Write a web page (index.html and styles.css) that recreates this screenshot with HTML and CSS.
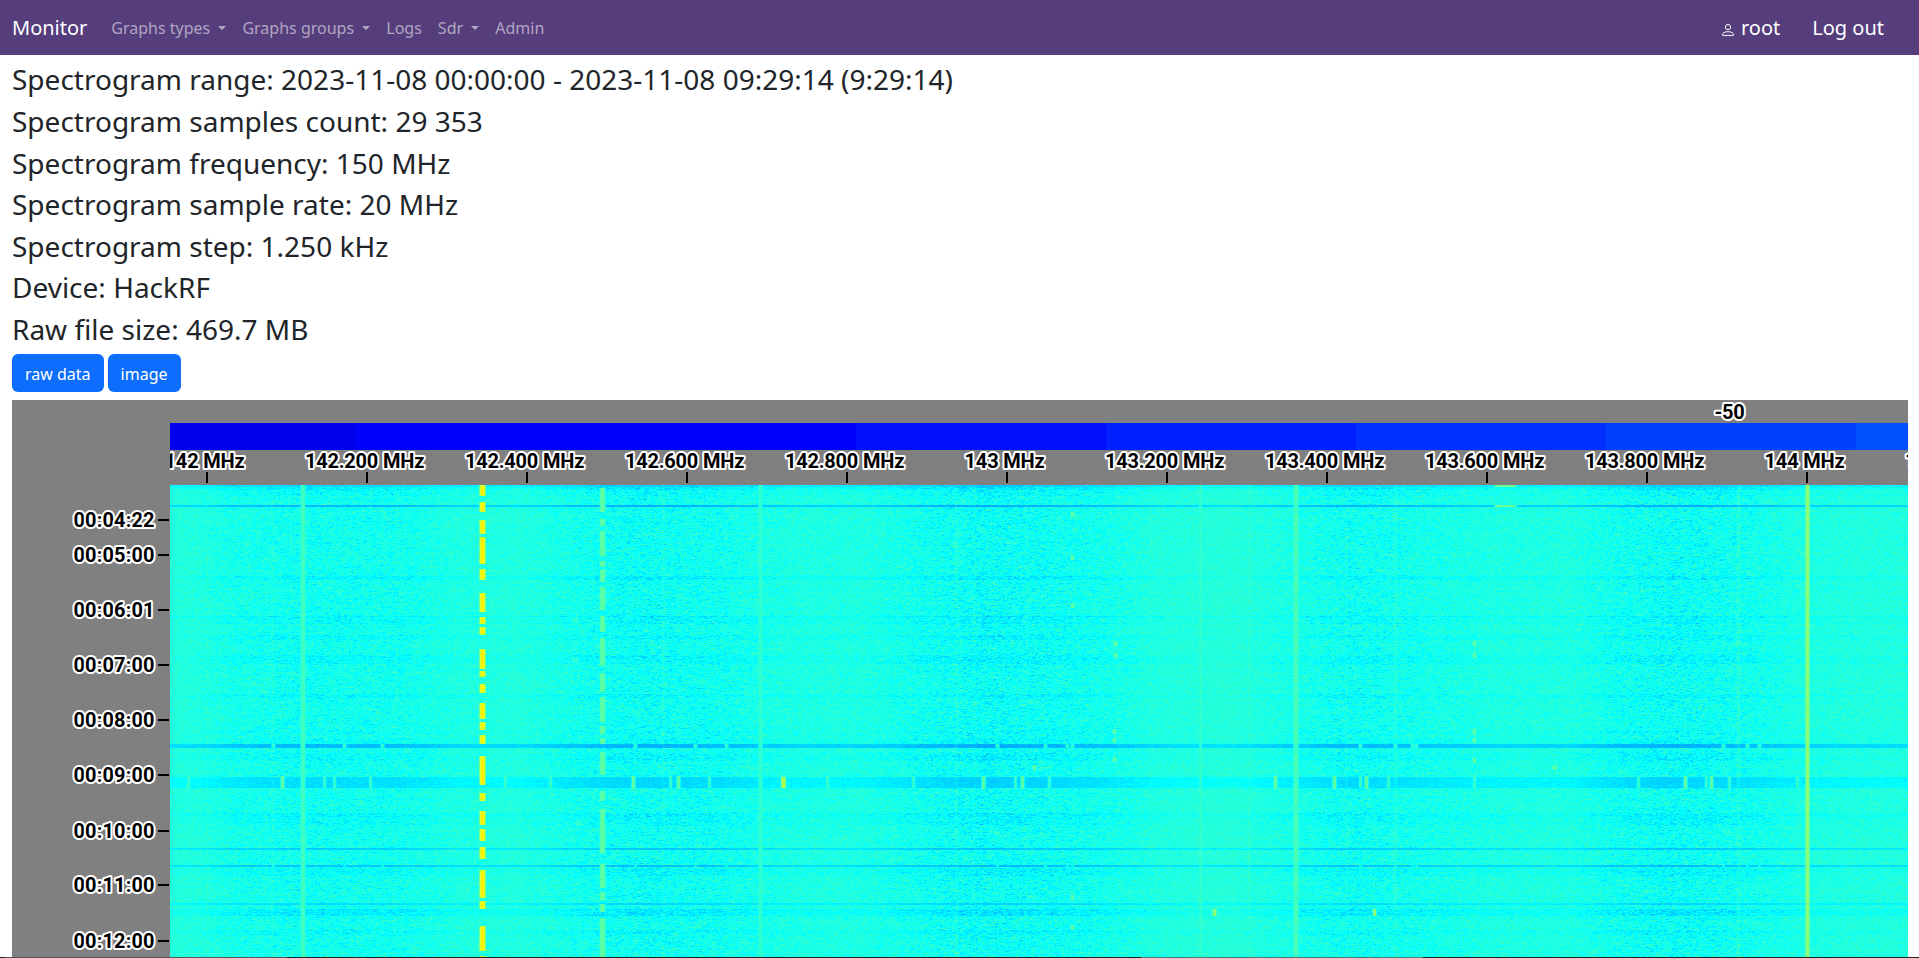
FILE: index.html
```html
<!DOCTYPE html>
<html lang="en">
<head>
<meta charset="utf-8">
<title>Monitor</title>
<link rel="stylesheet" href="styles.css">
</head>
<body>
<nav class="navbar">
  <a class="brand">Monitor</a>
  <a class="nav-link dropdown">Graphs types </a>
  <a class="nav-link dropdown">Graphs groups </a>
  <a class="nav-link">Logs</a>
  <a class="nav-link dropdown">Sdr </a>
  <a class="nav-link">Admin</a>
  <div class="account">
    <a class="user"><svg class="user-icon" viewBox="0 0 12 12"><circle cx="6" cy="3.1" r="2.6"/><path d="M.5 11.4V10.6C.5 8.8 3 7.7 6 7.7s5.5 1.1 5.5 2.9v.8z"/></svg>root</a>
    <a>Log out</a>
  </div>
</nav>
<main class="content">
  <h3>Spectrogram range: 2023-11-08 00:00:00 - 2023-11-08 09:29:14 (9:29:14)</h3>
  <h3>Spectrogram samples count: 29 353</h3>
  <h3>Spectrogram frequency: 150 MHz</h3>
  <h3>Spectrogram sample rate: 20 MHz</h3>
  <h3>Spectrogram step: 1.250 kHz</h3>
  <h3>Device: HackRF</h3>
  <h3>Raw file size: 469.7 MB</h3>
  <div class="buttons"><a class="btn">raw data</a><a class="btn">image</a></div>
  <div class="chart">
    <svg class="time-axis" id="time" width="158" height="558"></svg>
    <div class="plot">
      <svg class="freq-axis" id="freq" width="1738" height="85"></svg>
      <canvas id="heat" width="1738" height="473"></canvas>
    </div>
  </div>
</main>
<div class="status"></div>
<script src="script.js"></script>
</body>
</html>
```

FILE: styles.css
```css
* { box-sizing: border-box; }
body {
  margin: 0;
  height: 958px;
  overflow: hidden;
  position: relative;
  background: #fff;
  color: #212529;
  font: 16px/1.5 "Noto Sans", sans-serif;
}
.navbar {
  display: flex;
  align-items: center;
  height: 55px;
  padding: 0 27px 0 12px;
  background: #563d7c;
  color: #fff;
}
.brand { font-size: 20px; margin-right: 16px; }
.nav-link { padding: 0 8px; color: rgba(255, 255, 255, .55); white-space: pre; }
.dropdown::after {
  content: "";
  display: inline-block;
  margin-left: 4px;
  vertical-align: 4px;
  border-top: 4.8px solid;
  border-left: 4.8px solid transparent;
  border-right: 4.8px solid transparent;
}
.account { display: flex; gap: 32px; margin-left: auto; padding-right: 8px; font-size: 20px; }
.user { display: flex; align-items: center; gap: 7px; }
.user-icon { width: 12px; height: 12px; margin-top: 4px; fill: none; stroke: #fff; stroke-width: 1; }
.content { padding: 8.4px 11px 0 12px; }
h3 { margin: 0 0 8px; font-size: 28px; line-height: 33.6px; font-weight: 400; }
.buttons { display: flex; gap: 4px; height: 38px; margin: -.6px 0 8px; }
.btn { padding: 8px 13px 6px; border-radius: 6px; background: #0d6efd; color: #fff; line-height: 24px; }
.chart { display: flex; height: 558px; background: #808080; overflow: hidden; }
.time-axis, .freq-axis, canvas { display: block; flex: none; }
.plot { width: 1738px; overflow: hidden; }
text {
  font: 700 20px Roboto, sans-serif;
  fill: #000;
  stroke: #fff;
  stroke-width: 4px;
  stroke-linejoin: round;
  paint-order: stroke fill;
}
.freq-axis text { letter-spacing: -.2px; }
.status {
  position: absolute;
  left: 0;
  top: 957px;
  width: 1919px;
  height: 1px;
  background: linear-gradient(90deg, #222 5px, #555 5px 287px, #222 287px 1141px, #467a76 1141px 1423px, #222 1423px);
}
```

FILE: script.js
```js
const NS = 'http://www.w3.org/2000/svg';
function add(parent, tag, attrs, text) {
  const el = document.createElementNS(NS, tag);
  for (const k in attrs) el.setAttribute(k, attrs[k]);
  if (text) el.textContent = text;
  parent.appendChild(el);
}

// Frequency axis with the power scale above it
const freq = document.getElementById('freq');
const scale = [[0, '#0000ef'], [187, '#0000ff'], [686, '#0010ff'], [936, '#0020ff'], [1186, '#0030ff'], [1436, '#0040ff'], [1686, '#0050ff']];
scale.forEach(([x, fill], i) => {
  const end = scale[i + 1] ? scale[i + 1][0] : 1738;
  add(freq, 'rect', { x, y: 23, width: end - x, height: 27, fill });
});
add(freq, 'text', { x: 1559.5, y: 19, 'text-anchor': 'middle' }, '-50');
for (let i = 0; i < 12; i++) {
  const mhz = 142 + i * 0.2;
  const label = (i % 5 ? mhz.toFixed(3) : Math.round(mhz)) + ' MHz';
  add(freq, 'text', { x: 34.5 + i * 160, y: 68, 'text-anchor': 'middle' }, label);
  add(freq, 'rect', { x: 36 + i * 160, y: 72, width: 2, height: 11, fill: '#000' });
}

// Time axis
const time = document.getElementById('time');
[['00:04:22', 120], ['00:05:00', 155], ['00:06:01', 210], ['00:07:00', 265], ['00:08:00', 320],
 ['00:09:00', 375], ['00:10:00', 431], ['00:11:00', 485], ['00:12:00', 541]].forEach(([t, y]) => {
  add(time, 'text', { x: 61.5, y: y + 7, textLength: 81 }, t);
  add(time, 'rect', { x: 146, y: y - 1, width: 11, height: 2, fill: '#000' });
});

// Heat map; positions are page pixels, levels are colour-map offsets from cyan
const W = 1738, H = 473, X0 = 170, Y0 = 485;
const level = new Float32Array(W * H);
let seed = 12345;
const rnd = () => (seed = (seed * 1664525 + 1013904223) >>> 0) / 4294967296;

const profile = [[170, .1], [200, .22], [230, .5], [300, .75], [400, .65], [455, .3], [520, .2], [570, .55], [600, .75], [645, .85], [720, .7], [790, .32], [860, .28],
  [925, .7], [985, .95], [1050, .8], [1110, .55], [1160, .2], [1230, .04], [1285, .4], [1350, .78], [1410, .6], [1490, .32],
  [1570, .28], [1620, .7], [1670, .9], [1730, .75], [1800, .35], [1860, .2], [1908, .2]];
const weak = new Float32Array(W);
for (let x = 0; x < W; x++) {
  let i = 0;
  while (i < profile.length - 2 && profile[i + 1][0] < x + X0) i++;
  const [a, va] = profile[i], [b, vb] = profile[i + 1];
  weak[x] = va + (vb - va) * Math.min(1, (x + X0 - a) / (b - a));
}

// Dark rows: top, bottom, base drop, extra drop where the signal is weak
const rows = [[485, 486, 36, 26], [487, 489, 10, 24], [490, 495, 2, 14], [505, 506, 68, 30], [521, 521, 2, 10], [576, 579, 6, 20], [616, 616, 14, 18],
  [617, 623, 2, 15], [635, 639, 3, 15], [655, 663, 2, 17], [694, 697, 7, 14], [730, 733, 2, 10], [738, 743, 3, 10],
  [744, 747, 60, 32], [753, 760, 2, 18], [777, 787, 28, 30], [813, 816, 7, 16], [817, 824, 1, 14], [848, 849, 46, 24], [865, 866, 54, 28],
  [868, 875, 2, 18], [903, 904, 34, 20], [909, 915, 10, 28], [930, 934, 3, 14]];
const base = new Float32Array(H), extra = new Float32Array(H);
rows.forEach(([a, b, p, q]) => {
  for (let y = a; y <= b; y++) { base[y - Y0] = p; extra[y - Y0] = q; }
});
for (let y = 0; y < H; y++) {
  let prev = 0;
  const solid = base[y] >= 20;
  const jitter = (rnd() - .5) * 5;
  for (let x = 0; x < W; x++) {
    const w = weak[x], n = rnd() + rnd() + rnd() - 1.5;
    const s = n * .8 + prev * .45;
    prev = s;
    const amp = solid ? 14 : 14 + 44 * w;
    level[y * W + x] = 38 - 31 * w + s * amp - base[y] - extra[y] * w + jitter;
  }
}

function line(cx, half, gain, top = 485, bottom = 958, floor = -999) {
  for (let y = Math.max(top, Y0); y < Math.min(bottom, 958); y++)
    for (let x = Math.floor(cx - half - 1); x <= cx + half + 1; x++) {
      if (x < X0 || x >= X0 + W) continue;
      const f = Math.max(0, Math.min(1, (half + 1 - Math.abs(x - cx)) / 1.6));
      const k = (y - Y0) * W + x - X0;
      if (floor > -999) level[k] += (floor + (rnd() - .5) * 10 - level[k]) * f;
      else level[k] += gain * f;
    }
}
[[207, 1, 9], [266, 1, 5], [272, 1, 10], [290, .5, 7], [325, .5, 6], [396, .5, 6], [663, 1, 14], [956, 1, 15], [974, 1, 10], [1026, 1, 9],
 [1118, .5, 8], [1150, .5, 7], [1249, 1, 12], [1346, 1, 11], [1395, 1.5, 13], [1738, 1.5, 20], [1729, .5, 7]]
  .forEach(([x, h, g]) => line(x, h, g));
line(302.5, 2, 0, 485, 958, 62);
line(760, 1.8, 0, 485, 958, 48);
line(1200, 1, 0, 485, 958, 54);
line(1295.5, 2.2, 0, 485, 958, 62);
for (let y = 485; y < 958; y += 30) line(1295.5, 1.5, 14, y, y + 17);
line(1807, 1.8, 0, 485, 958, 138);

[[485, 496], [502, 512], [520, 534], [537, 564], [569, 580], [593, 612], [617, 624], [627, 635], [649, 669], [671, 677],
 [684, 693], [703, 719], [722, 730], [735, 744], [756, 785], [793, 801], [811, 825], [829, 841], [847, 859], [870, 898],
 [901, 909], [926, 951], [956, 958]].forEach(([a, b]) => {
  line(482, 2.8, 0, a, b, 215);
  line(482, .8, 0, a + 2, b - 2, 290);
});
[[488, 512], [519, 526], [531, 556], [561, 567], [570, 582], [587, 610], [616, 632], [638, 665], [673, 692], [697, 722],
 [726, 734], [738, 744], [752, 775], [791, 801], [809, 853], [864, 888], [892, 900], [904, 912], [918, 958]]
  .forEach(([a, b]) => line(602, 2.4, 0, a, b, 92));

// Short bursts inside the dark rows
[188, 324, 334, 370, 505, 550, 670, 709, 827, 913, 1015, 1049, 1360, 1388, 1474, 1638, 1706, 1729, 1797]
  .forEach(x => line(x, 1.2, 0, 776, 788, 60));
[282, 633, 678, 983, 1022, 1275, 1334, 1366, 1685, 1711].forEach(x => line(x, 1.6, 0, 776, 789, 90));
line(783, 2.2, 0, 777, 788, 170);
[273, 344, 382, 635, 695, 726, 997, 1045, 1067, 1072, 1360, 1395, 1412, 1416, 1723, 1747, 1759]
  .forEach(x => { line(x, 1.5, 0, 744, 748, 50); line(x, 1, 0, 865, 867, 25); });
[[1072, 514], [1072, 557], [1072, 605], [1115, 643], [1115, 655], [1114, 731], [1114, 740], [1114, 759], [1474, 643],
 [1474, 655], [1474, 731], [1474, 740], [1474, 760], [1034, 767], [1554, 767], [1072, 897], [1072, 927]]
  .forEach(([x, y]) => line(x, 1.6, 0, y - 2, y + 3, 88));
[[575, 620], [575, 660], [578, 823]].forEach(([x, y]) => line(x, 3, 0, y - 3, y + 3, 42));
line(1214, 1.6, 0, 909, 916, 135);
line(1374, 1.6, 0, 909, 916, 135);
line(1505, 10.5, 0, 485, 487, 105);
line(1505, 10.5, 0, 505, 507, 105);

const ctx = document.getElementById('heat').getContext('2d');
const img = ctx.createImageData(W, H);
for (let i = 0; i < W * H; i++) {
  const t = Math.round(level[i] / 8) * 8;
  const p = i * 4;
  img.data[p] = Math.max(0, Math.min(255, t));
  img.data[p + 1] = t < 0 ? 255 + t : t > 255 ? 511 - t : 255;
  img.data[p + 2] = t < 0 ? 255 : Math.max(0, 255 - t);
  img.data[p + 3] = 255;
}
ctx.putImageData(img, 0, 0);
```
